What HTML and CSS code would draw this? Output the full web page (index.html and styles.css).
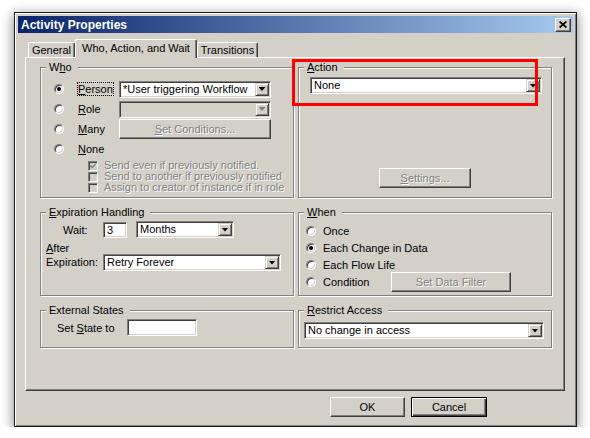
FILE: index.html
```html
<!DOCTYPE html>
<html>
  <head>
    <meta charset="UTF-8" />
    <title>Activity Properties</title>
    <link rel="stylesheet" href="styles.css">
  </head>
  <body>
    <div class="window">
      <div class="titlebar">
        <span class="title">Activity Properties</span>
        <button class="close-button" title="Close">
          <svg width="8" height="7" viewBox="0 0 8 7">
            <path d="M0.6 0.5 L7.4 6.5 M7.4 0.5 L0.6 6.5" stroke="#000" stroke-width="1.7" fill="none" />
          </svg>
        </button>
      </div>

      <div class="tabs">
        <div class="tab tab-general">General</div>
        <div class="tab tab-who active">Who, Action, and Wait</div>
        <div class="tab tab-transitions">Transitions</div>
      </div>

      <div class="panel">
        <!-- Who -->
        <div class="group who-group">
          <span class="legend">W<u>h</u>o</span>
          <div class="who-row">
            <span class="radio checked"></span>
            <span class="option"><span class="focus"><u>P</u>erson</span></span>
            <div class="combo"><span class="combo-text">*User triggering Workflow</span><span class="drop"></span></div>
          </div>
          <div class="who-row">
            <span class="radio"></span>
            <span class="option"><u>R</u>ole</span>
            <div class="combo disabled"><span class="combo-text"></span><span class="drop"></span></div>
          </div>
          <div class="who-row">
            <span class="radio"></span>
            <span class="option"><u>M</u>any</span>
            <button class="btn" disabled><u>S</u>et Conditions...</button>
          </div>
          <div class="who-row">
            <span class="radio"></span>
            <span class="option"><u>N</u>one</span>
          </div>
          <div class="checks">
            <div class="check-row">
              <span class="check">
                <svg width="6" height="6" viewBox="0 0 6 6"><path d="M0.3 2.6 L2.2 4.5 L5.7 0.9" stroke="#808080" stroke-width="1.4" fill="none" /></svg>
              </span>
              <span class="dim">Send even if previously notified.</span>
            </div>
            <div class="check-row">
              <span class="check"></span>
              <span class="dim">Send to another if previously notified</span>
            </div>
            <div class="check-row">
              <span class="check"></span>
              <span class="dim">Assign to creator of instance if in role</span>
            </div>
          </div>
        </div>

        <!-- Action -->
        <div class="group action-group">
          <span class="legend"><u>A</u>ction</span>
          <div class="combo action-combo"><span class="combo-text">None</span><span class="drop"></span></div>
          <button class="btn settings-button" disabled><u>S</u>ettings...</button>
        </div>

        <!-- Expiration Handling -->
        <div class="group exp-group">
          <span class="legend"><u>E</u>xpiration Handling</span>
          <div class="wait-row">
            <span class="wait-label">Wait:</span>
            <div class="edit wait-edit">3</div>
            <div class="combo months"><span class="combo-text">Months</span><span class="drop"></span></div>
          </div>
          <div class="after-row">
            <span class="after-label"><u>A</u>fter<br>Expiration:</span>
            <div class="combo retry"><span class="combo-text">Retry Forever</span><span class="drop"></span></div>
          </div>
        </div>

        <!-- When -->
        <div class="group when-group">
          <span class="legend"><u>W</u>hen</span>
          <div class="when-row"><span class="radio"></span><span class="when-label">Once</span></div>
          <div class="when-row"><span class="radio checked"></span><span class="when-label">Each Change in Data</span></div>
          <div class="when-row"><span class="radio"></span><span class="when-label">Each Flow Life</span></div>
          <div class="when-row">
            <span class="radio"></span><span class="when-label condition">Condition</span>
            <button class="btn filter-button" disabled>Set Data Filter</button>
          </div>
        </div>

        <!-- External States -->
        <div class="group ext-group">
          <span class="legend">External States</span>
          <div class="state-row">
            <span class="state-label">Set <u>S</u>tate to</span>
            <div class="edit state-edit"></div>
          </div>
        </div>

        <!-- Restrict Access -->
        <div class="group access-group">
          <span class="legend"><u>R</u>estrict Access</span>
          <div class="combo access-combo"><span class="combo-text">No change in access</span><span class="drop"></span></div>
        </div>
      </div>

      <div class="footer">
        <button class="btn ok-button">OK</button>
        <button class="btn default">Cancel</button>
      </div>
    </div>

    <div class="callout"></div>
  </body>
</html>
```

FILE: styles.css
```css
:root {
  --face: #d4d0c8;
  --shadow: #808080;
  --dark: #404040;
  --light: #fff;
}

body {
  margin: 0;
  padding: 12px 0 0 14px;
  background: #fff;
  font-family: "Liberation Sans", Arial, sans-serif;
  font-size: 11px;
  color: #000;
}

/* window frame */
.window {
  box-sizing: border-box;
  width: 563px;
  height: 415px;
  padding: 3px;
  background: var(--face);
  border: 1px solid #1e1e1e;
  box-shadow: inset 1px 1px var(--light), inset -1px -1px var(--shadow),
    0 3px 11px 1px rgba(0, 0, 0, 0.45);
}

.titlebar {
  display: flex;
  align-items: center;
  justify-content: space-between;
  height: 17px;
  padding: 0 2px 0 3px;
  background: linear-gradient(to right, #0a246a, #a6caf0);
}

.title {
  color: #fff;
  font-weight: bold;
  font-size: 12px;
}

.close-button {
  box-sizing: border-box;
  display: flex;
  align-items: center;
  justify-content: center;
  width: 16px;
  height: 14px;
  padding: 0;
  background: var(--face);
  border: 1px solid;
  border-color: var(--light) var(--dark) var(--dark) var(--light);
  box-shadow: inset -1px -1px var(--shadow);
}

/* tabs */
.tabs {
  position: relative;
  z-index: 1;
  display: flex;
  align-items: flex-end;
  height: 18px;
  margin: 6px 0 0 10px;
}

.tab {
  box-sizing: border-box;
  height: 15px;
  padding-top: 1px;
  line-height: 13px;
  text-align: center;
  background: var(--face);
  border: 1px solid;
  border-color: var(--light) var(--dark) transparent var(--light);
  border-bottom: 0;
  border-radius: 2px 2px 0 0;
  box-shadow: inset -1px 0 var(--shadow);
}

.tab-general {
  width: 47px;
}
.tab-who {
  width: 122px;
}
.tab-transitions {
  width: 61px;
}

.tab.active {
  height: 19px;
  margin-bottom: -1px;
  padding-top: 2px;
}

/* tab page */
.panel {
  box-sizing: border-box;
  display: grid;
  grid-template-columns: 254px 254px;
  grid-template-rows: 131px 84px 38px;
  column-gap: 4px;
  row-gap: 14px;
  align-content: start;
  width: 540px;
  height: 334px;
  margin-left: 7px;
  padding: 9px 0 0 14px;
  border: 1px solid;
  border-color: var(--light) var(--dark) var(--dark) var(--light);
  box-shadow: inset -1px -1px var(--shadow);
}

.group {
  position: relative;
  border: 1px solid var(--shadow);
  box-shadow: inset 1px 1px var(--light), 1px 1px var(--light);
}

.legend {
  position: absolute;
  top: -7px;
  left: 5px;
  padding: 0 6px 0 3px;
  line-height: 13px;
  background: var(--face);
  white-space: nowrap;
}

/* controls */
.combo,
.edit {
  box-sizing: border-box;
  height: 17px;
  padding: 1px;
  background: #fff;
  border: 1px solid;
  border-color: var(--shadow) var(--light) var(--light) var(--shadow);
  box-shadow: inset 1px 1px var(--dark), inset -1px -1px var(--face);
}

.combo {
  display: flex;
}

.combo-text {
  flex: 1;
  padding-left: 2px;
  line-height: 13px;
  white-space: nowrap;
  overflow: hidden;
}

.drop {
  box-sizing: border-box;
  display: flex;
  align-items: center;
  justify-content: center;
  width: 14px;
  background: var(--face);
  border: 1px solid;
  border-color: var(--face) var(--dark) var(--dark) var(--face);
  box-shadow: inset 1px 1px var(--light), inset -1px -1px var(--shadow);
}

.drop::after {
  content: "";
  width: 7px;
  height: 4px;
  background: #000;
  clip-path: polygon(0 0, 100% 0, 50% 100%);
}

.combo.disabled {
  background: var(--face);
}

.combo.disabled .drop::after {
  background: var(--shadow);
}

.edit {
  padding-left: 3px;
  line-height: 13px;
}

.btn {
  box-sizing: border-box;
  height: 20px;
  padding: 0;
  font: inherit;
  color: #000;
  background: var(--face);
  border: 1px solid;
  border-color: var(--light) var(--dark) var(--dark) var(--light);
  box-shadow: inset -1px -1px var(--shadow);
}

.btn:disabled {
  color: var(--shadow);
  text-shadow: 1px 1px var(--light);
}

.btn.default {
  width: 76px;
  border-color: #000;
  box-shadow: inset 1px 1px var(--light), inset -1px -1px var(--dark),
    inset -2px -2px var(--shadow);
}

.radio {
  box-sizing: border-box;
  display: flex;
  align-items: center;
  justify-content: center;
  width: 10px;
  height: 10px;
  background: #fff;
  border: 1px solid;
  border-color: var(--shadow) var(--light) var(--light) var(--shadow);
  border-radius: 50%;
  box-shadow: inset 1px 1px var(--dark), inset -1px -1px var(--face);
}

.radio.checked::after {
  content: "";
  width: 4px;
  height: 4px;
  border-radius: 50%;
  background: #000;
}

.check {
  box-sizing: border-box;
  display: flex;
  align-items: center;
  justify-content: center;
  width: 10px;
  height: 10px;
  background: var(--face);
  border: 1px solid;
  border-color: var(--shadow) var(--light) var(--light) var(--shadow);
  box-shadow: inset 1px 1px var(--dark), inset -1px -1px var(--face);
}

.dim {
  color: var(--shadow);
  text-shadow: 1px 1px var(--light);
}

/* Who */
.who-group {
  padding: 11px 0 0 13px;
}

.who-row {
  display: grid;
  grid-template-columns: 24px 41px 152px;
  align-items: center;
  height: 20px;
}

.focus {
  outline: 1px dotted #000;
  line-height: 11px;
}

.checks {
  margin-top: 1px;
  padding-left: 34px;
}

.check-row {
  display: flex;
  align-items: center;
  gap: 6px;
  height: 11px;
  line-height: 11px;
}

/* Action */
.action-group {
  padding-top: 9px;
}

.action-combo {
  width: 232px;
  margin-left: 11px;
}

.settings-button {
  display: block;
  width: 92px;
  margin: 74px 0 0 80px;
}

/* Expiration Handling */
.exp-group {
  padding-top: 8px;
}

.wait-row {
  display: flex;
  align-items: center;
  height: 17px;
}

.wait-label {
  width: 40px;
  margin-left: 22px;
}

.wait-edit {
  width: 24px;
  height: 16px;
  margin-right: 9px;
}

.months {
  width: 98px;
}

.after-row {
  display: flex;
  align-items: flex-start;
  margin-top: 3px;
}

.after-label {
  width: 57px;
  margin-left: 5px;
  line-height: 14px;
}

.retry {
  width: 178px;
  margin-top: 13px;
}

/* When */
.when-group {
  padding-top: 9px;
}

.when-row {
  display: flex;
  align-items: center;
  height: 17px;
  padding-left: 7px;
}

.when-label {
  margin-left: 7px;
}

.when-label.condition {
  width: 68px;
}

.filter-button {
  width: 120px;
}

/* External States */
.ext-group {
  padding-top: 8px;
}

.state-row {
  display: flex;
  align-items: center;
  height: 17px;
}

.state-label {
  width: 70px;
  margin-left: 16px;
}

.state-edit {
  width: 70px;
}

/* Restrict Access */
.access-group {
  padding-top: 11px;
}

.access-combo {
  width: 240px;
  margin-left: 5px;
}

/* dialog buttons */
.footer {
  display: flex;
  justify-content: flex-end;
  gap: 6px;
  margin-top: 6px;
  padding-right: 86px;
}

.ok-button {
  width: 75px;
}

/* red highlight drawn over the Action box */
.callout {
  position: absolute;
  top: 59px;
  left: 292px;
  box-sizing: border-box;
  width: 246px;
  height: 47px;
  border: 3px solid #f00;
}
```
